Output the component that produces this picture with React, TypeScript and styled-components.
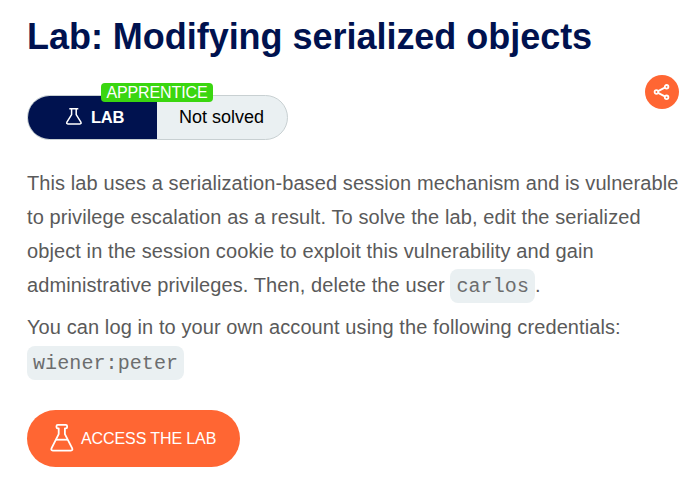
import React from "react";
import styled, { createGlobalStyle } from "styled-components";

const GlobalStyle = createGlobalStyle`
  * { box-sizing: border-box; }
  body {
    margin: 0;
    background: #fff;
    overflow: hidden;
    font-family: "Liberation Sans", Arial, sans-serif;
  }
`;

const Page = styled.main`
  width: 693px;
  height: 482px;
  padding: 15px 14px 0 27px;
  overflow: hidden;
`;

const Title = styled.h1`
  margin: 0;
  font-size: 36px;
  line-height: 44px;
  font-weight: 700;
  letter-spacing: -0.03px;
  color: #00124f;
  white-space: nowrap;
`;

const MetaRow = styled.div`
  display: flex;
  justify-content: space-between;
  align-items: flex-start;
  height: 65px;
  margin-top: 16px;
`;

const StatusWrap = styled.div`
  position: relative;
  margin-top: 20px;
`;

const StatusPill = styled.div`
  display: flex;
  width: 261px;
  height: 45px;
  border: 1px solid #c8d0d2;
  border-radius: 23px;
  overflow: hidden;
  background: #eaf0f2;
  font-size: 18px;
`;

const PillLabel = styled.div`
  display: flex;
  align-items: center;
  gap: 8px;
  width: 129px;
  padding-left: 37px;
  background: #00124f;
  color: #fff;
  font-size: 16.5px;
  font-weight: 700;
  letter-spacing: -0.3px;
`;

const PillStatus = styled.div`
  flex: 1;
  display: flex;
  align-items: center;
  padding-left: 22px;
  color: #000;
`;

const LevelBadge = styled.span`
  position: absolute;
  top: -12px;
  left: 74px;
  width: 112px;
  height: 19px;
  border-radius: 4px;
  background: #3ad610;
  color: #fff;
  font-size: 16px;
  line-height: 19px;
  letter-spacing: -0.1px;
  text-align: center;
`;

const ShareButton = styled.button`
  display: grid;
  place-items: center;
  width: 34px;
  height: 34px;
  padding: 0;
  border: 0;
  border-radius: 50%;
  background: #ff6633;
`;

const Paragraph = styled.p<{ $gap: number }>`
  margin: ${(p) => p.$gap}px 0 0;
  font-size: 20px;
  line-height: 34px;
  letter-spacing: 0.095px;
  color: #5a5a5a;
  white-space: nowrap;
`;

const Line = styled.span<{ $offset?: number }>`
  display: block;
  height: 34px;
  margin-top: ${(p) => p.$offset ?? 0}px;
`;

const Code = styled.code<{ $drop?: number }>`
  display: inline-block;
  height: 34px;
  margin-top: ${(p) => p.$drop ?? 0}px;
  padding: 1px 6px 0;
  border-radius: 8px;
  background: #eaf0f2;
  color: #6c6d6e;
  font-family: "Liberation Mono", "Courier New", monospace;
  font-size: 20px;
  line-height: 34px;
  vertical-align: top;
`;

const AccessButton = styled.a`
  display: flex;
  align-items: center;
  gap: 7px;
  width: 213px;
  height: 57px;
  margin-top: 30px;
  padding-left: 23px;
  border-radius: 29px;
  background: #ff6633;
  color: #fff;
  font-size: 16px;
  letter-spacing: -0.1px;
  white-space: nowrap;
`;

const FlaskSvg = styled.svg<{ $lift: number }>`
  flex: none;
  margin-bottom: ${(p) => p.$lift}px;
`;

const SmallFlask = () => (
  <FlaskSvg $lift={1} width="18" height="18" viewBox="0 0 18 18" fill="none" stroke="#fff" strokeWidth="1.5" strokeLinejoin="round">
    <path d="M4.3 0.8h9M6.6 1v5.6L1.9 14.2q-.8 1.7 1 1.7h12q1.8 0 1-1.7L11.2 6.6V1" />
  </FlaskSvg>
);

const LargeFlask = () => (
  <FlaskSvg $lift={2} width="24" height="30" viewBox="0 0 24 30" fill="none" stroke="#fff" strokeWidth="1.8" strokeLinejoin="round">
    <path d="M8.7 5.3H7.8q-1.3 0-1.3-1V2.9q0-1 1.3-1h8q1.3 0 1.3 1v1.4q0 1-1.3 1h-.9v5.8l7.2 14q1 2.5-1.2 2.5H2.8q-2.2 0-1.2-2.5l7.1-14z" />
    <path d="M5.8 16.7h12" />
  </FlaskSvg>
);

const ShareIcon = () => (
  <svg width="18" height="18" viewBox="0 0 18 18" fill="none" stroke="#fff" strokeWidth="1.8">
    <path d="M5.1 8.1l6.7-3.5M5.1 9.9l6.7 3.5" />
    <circle cx="3.4" cy="9" r="1.8" />
    <circle cx="13.6" cy="3.8" r="1.8" />
    <circle cx="13.6" cy="14.3" r="1.8" />
  </svg>
);

export default function App() {
  return (
    <>
      <GlobalStyle />
      <Page>
        <Title>Lab: Modifying serialized objects</Title>
        <MetaRow>
          <StatusWrap>
            <StatusPill>
              <PillLabel>
                <SmallFlask />
                LAB
              </PillLabel>
              <PillStatus>Not solved</PillStatus>
            </StatusPill>
            <LevelBadge>APPRENTICE</LevelBadge>
          </StatusWrap>
          <ShareButton aria-label="Share">
            <ShareIcon />
          </ShareButton>
        </MetaRow>
        <Paragraph $gap={26}>
          <Line>This lab uses a serialization-based session mechanism and is vulnerable</Line>
          <Line>to privilege escalation as a result. To solve the lab, edit the serialized</Line>
          <Line>object in the session cookie to exploit this vulnerability and gain</Line>
          <Line>
            administrative privileges. Then, delete the user <Code $drop={1}>carlos</Code>.
          </Line>
        </Paragraph>
        <Paragraph $gap={8}>
          <Line>You can log in to your own account using the following credentials:</Line>
          <Line $offset={2}>
            <Code>wiener:peter</Code>
          </Line>
        </Paragraph>
        <AccessButton>
          <LargeFlask />
          ACCESS THE LAB
        </AccessButton>
      </Page>
    </>
  );
}
